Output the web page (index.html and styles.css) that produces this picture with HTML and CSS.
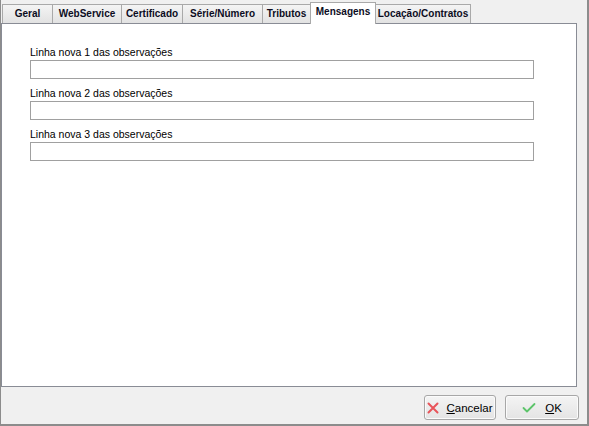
FILE: index.html
```html
<!DOCTYPE html>
<html lang="pt">
<head>
<meta charset="utf-8">
<title>Configurações</title>
<link rel="stylesheet" href="styles.css">
</head>
<body>
<div class="window">
  <div class="tabs">
    <div class="tab w-geral">Geral</div>
    <div class="tab w-ws">WebService</div>
    <div class="tab w-cert">Certificado</div>
    <div class="tab w-serie">Série/Número</div>
    <div class="tab w-trib">Tributos</div>
    <div class="tab w-msg active">Mensagens</div>
    <div class="tab w-loc">Locação/Contratos</div>
  </div>
  <div class="page">
    <div class="field">
      <label class="label">Linha nova 1 das observações</label>
      <div class="input"></div>
    </div>
    <div class="field">
      <label class="label">Linha nova 2 das observações</label>
      <div class="input"></div>
    </div>
    <div class="field">
      <label class="label">Linha nova 3 das observações</label>
      <div class="input"></div>
    </div>
  </div>
  <div class="footer">
    <button class="btn btn-cancel">
      <svg class="ico" width="12" height="12" viewBox="0 0 12 12"><path d="M1.5 1.5 L10.5 10.5 M10.5 1.5 L1.5 10.5" stroke="#e8545a" stroke-width="2" fill="none" stroke-linecap="round"/></svg>
      <span><u>C</u>ancelar</span>
    </button>
    <button class="btn btn-ok">
      <svg class="ico" width="14" height="12" viewBox="0 0 14 12"><path d="M1.5 6 L5 9.5 L12.5 2" stroke="#5cc46a" stroke-width="1.8" fill="none" stroke-linecap="round" stroke-linejoin="round"/></svg>
      <span><u>O</u>K</span>
    </button>
  </div>
</div>
</body>
</html>
```
FILE: styles.css
```css
html, body {
  margin: 0;
  padding: 0;
  background: #f0f0f0;
}

body {
  font-family: "Liberation Sans", Arial, sans-serif;
  font-size: 10.5px;
  color: #000;
}

.window {
  width: 589px;
  height: 426px;
  box-sizing: border-box;
  background: #f0f0f0;
  border-left: 1px solid #8c8c8c;
  border-right: 2px solid #8c8c8c;
  border-bottom: 2px solid #8c8c8c;
  display: flex;
  flex-direction: column;
}

.tabs {
  display: flex;
  align-items: flex-end;
  height: 23px;
  padding-left: 1px;
  position: relative;
  z-index: 1;
}

.tab {
  height: 19px;
  box-sizing: border-box;
  padding: 0 0 1px;
  display: flex;
  align-items: center;
  justify-content: center;
  font-size: 10px;
  font-weight: bold;
  border: 1px solid #a9a9a9;
  border-bottom: none;
  margin-right: -1px;
  background: linear-gradient(#f4f4f4, #e2e2e2);
  color: #0c0c1e;
  flex: none;
  white-space: nowrap;
}

.w-geral { width: 51px; }
.w-ws { width: 70px; }
.w-cert { width: 62px; }
.w-serie { width: 81px; }
.w-trib { width: 49px; }
.w-msg { width: 66px; }
.w-loc { width: 96px; }

.tab.active {
  height: 22px;
  background: #fff;
  margin-bottom: -1px;
  padding-bottom: 5px;
  position: relative;
  z-index: 2;
}

.page {
  height: 364px;
  box-sizing: border-box;
  margin-right: 10px;
  background: #fff;
  border: 1px solid #898c95;
  padding: 22px 42px 0 28px;
  display: flex;
  flex-direction: column;
  gap: 8px;
}

.field {
  display: flex;
  flex-direction: column;
  gap: 2px;
}

.label {
  line-height: 12px;
  height: 12px;
}

.input {
  height: 19px;
  box-sizing: border-box;
  border: 1px solid #a0a0a0;
  background: #fff;
}

.footer {
  flex: 1;
  display: flex;
  justify-content: flex-end;
  align-items: flex-start;
  padding-top: 8px;
  padding-right: 8px;
  gap: 9px;
}

.btn {
  height: 25px;
  box-sizing: border-box;
  border: 1px solid #a7a7a7;
  border-radius: 3px;
  background: linear-gradient(#f4f4f4, #e4e4e4);
  font-family: inherit;
  font-size: 11.5px;
  color: #000;
  display: flex;
  align-items: center;
  justify-content: center;
  gap: 7px;
  padding: 0;
  box-shadow: inset 0 0 0 1px #fbfbfb;
}

.btn-cancel {
  width: 72px;
}

.btn-ok {
  width: 74px;
  gap: 9px;
}

.ico {
  display: block;
}
```
